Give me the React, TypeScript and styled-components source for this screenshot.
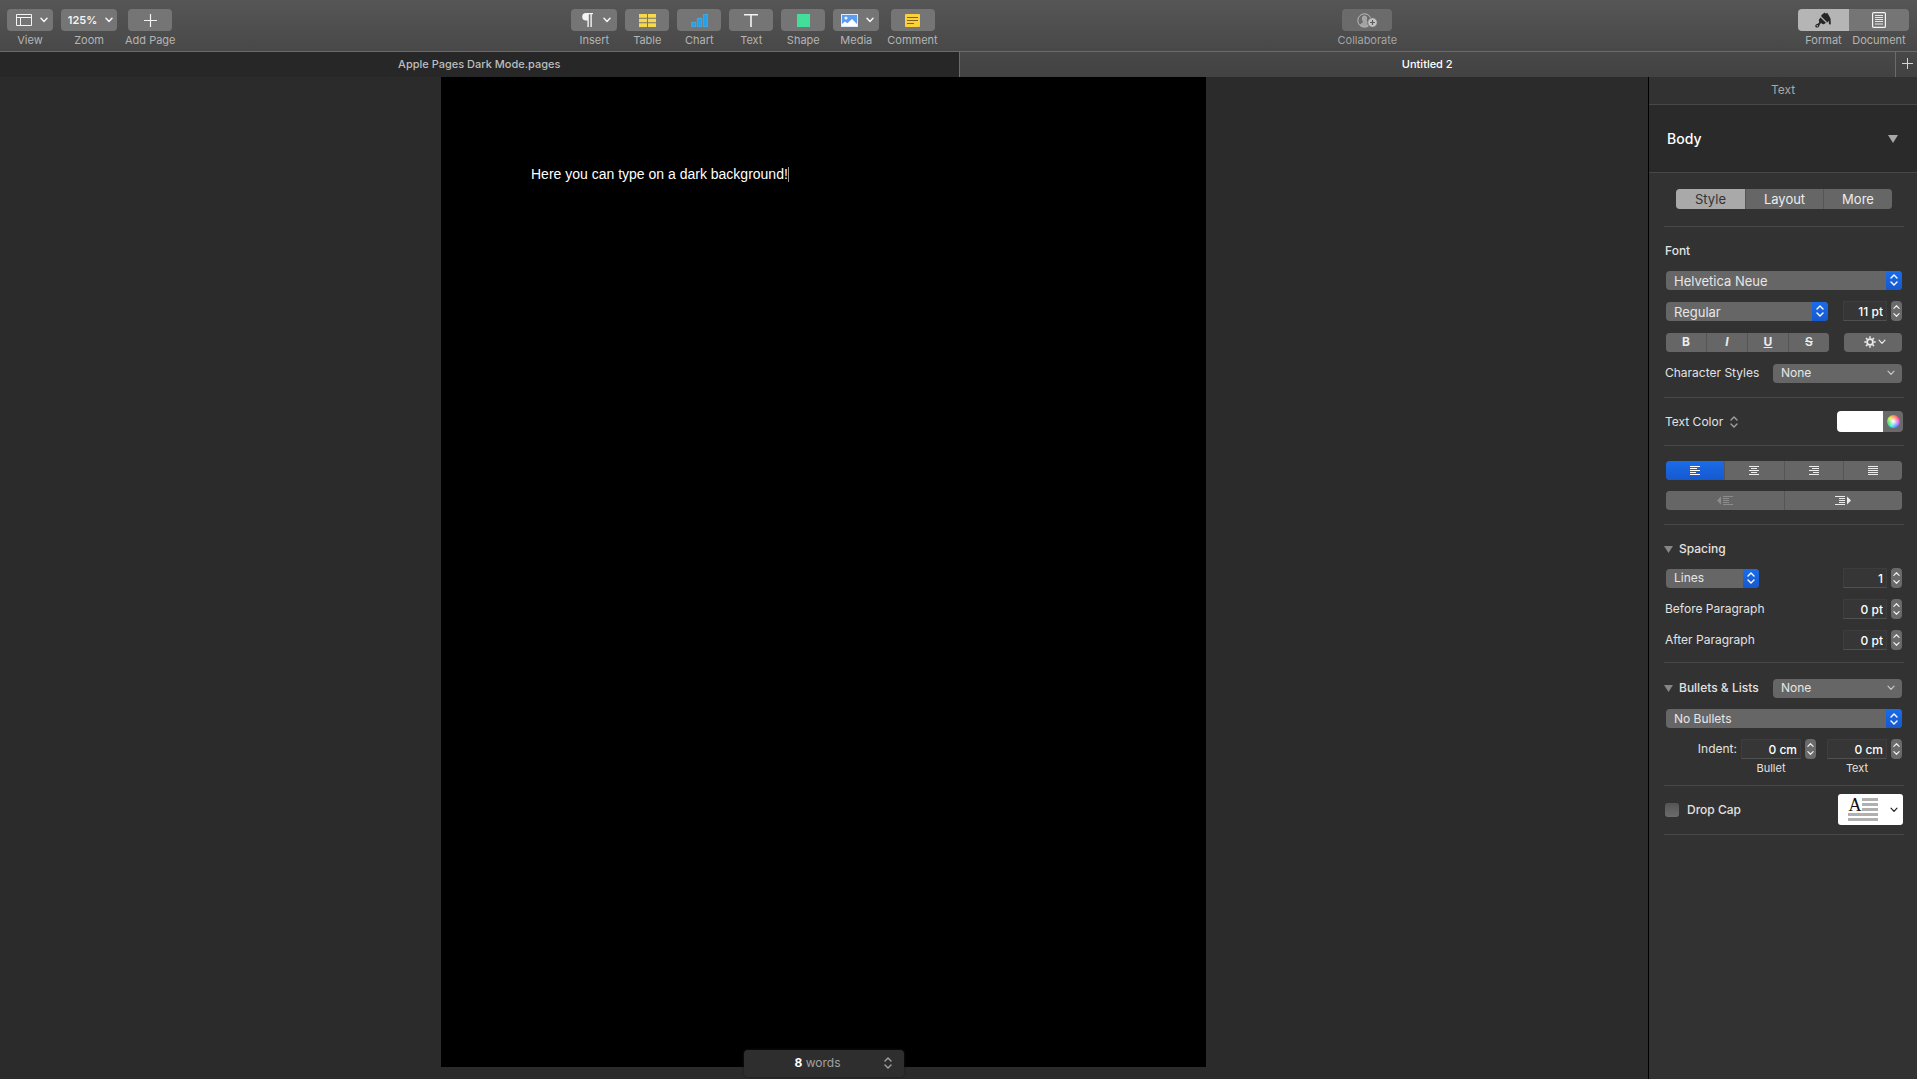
import React, { ReactNode, useState } from "react";
import styled, { createGlobalStyle, css } from "styled-components";

const Global = createGlobalStyle`
  *, *::before, *::after { box-sizing: border-box; }
  html, body, #root { height: 100%; }
  body {
    margin: 0;
    overflow: hidden;
    background: #2b2b2b;
    color: #e2e2e2;
    font-family: Inter, "Liberation Sans", sans-serif;
    font-size: 12px;
    line-height: 16px;
  }
  button, input, select, textarea { font: inherit; color: inherit; margin: 0; }
  button { padding: 0; border: 0; background: none; }
`;

const Window = styled.div`
  display: flex;
  flex-direction: column;
  height: 100vh;
`;

/* ---------- Toolbar ---------- */

const Toolbar = styled.header`
  display: flex;
  justify-content: space-between;
  align-items: flex-start;
  flex: none;
  height: 52px;
  padding: 9px 8px 0 7px;
  background: linear-gradient(#565656, #484848);
  border-bottom: 1px solid #6b6b6b;
`;

const ToolGroup = styled.div<{ $after?: number }>`
  display: flex;
  gap: 8px;
  margin-right: ${(p) => p.$after ?? 0}px;
`;

const Tool = styled.label<{ $dim?: boolean }>`
  display: flex;
  flex-direction: column;
  align-items: center;
  gap: 1px;
  font-size: 11px;
  color: ${(p) => (p.$dim ? "#a5a5a5" : "#b4b4b4")};
`;

const ToolButton = styled.button<{ $width: number; $dim?: boolean; $menu?: boolean }>`
  display: flex;
  align-items: center;
  justify-content: center;
  gap: 8px;
  width: ${(p) => p.$width}px;
  height: 22px;
  padding-left: ${(p) => (p.$menu ? 3 : 0)}px;
  border-radius: 4px;
  background: ${(p) => (p.$dim ? "#6b6b6b" : "#757575")};
  color: #f4f4f4;
`;

const ZoomValue = styled.span`
  font-size: 11px;
  font-weight: 600;
`;

const Modes = styled.div`
  display: grid;
  grid-template-columns: 51px 60px;
  row-gap: 1px;
  justify-items: center;
  margin-left: 5px;
  font-size: 11px;
  color: #b4b4b4;
`;

const ModeButton = styled.button<{ $active?: boolean }>`
  display: grid;
  place-items: center;
  width: 100%;
  height: 22px;
  border-radius: ${(p) => (p.$active ? "4px 0 0 4px" : "0 4px 4px 0")};
  background: ${(p) => (p.$active ? "#b5b5b5" : "#757575")};
  color: ${(p) => (p.$active ? "#262626" : "#f4f4f4")};
`;

/* ---------- Tabs ---------- */

const TabBar = styled.nav`
  display: flex;
  flex: none;
  height: 25px;
`;

const TabHalf = styled.div`
  display: flex;
  flex: 1;
`;

const Tab = styled.button<{ $active?: boolean }>`
  flex: 1;
  padding-bottom: 2px;
  font-size: 11px;
  font-weight: 500;
  ${(p) =>
    p.$active
      ? css`
          background: linear-gradient(#484848, #424242);
          color: #fff;
          border-left: 1px solid #6b6b6b;
        `
      : css`
          background: #272727;
          color: #bdbdbd;
        `}
`;

const NewTab = styled.button`
  display: grid;
  place-items: center;
  width: 22px;
  padding: 0 0 2px 2px;
  border-left: 1px solid #6b6b6b;
  background: linear-gradient(#484848, #424242);
  color: #d5d5d5;
`;

/* ---------- Canvas ---------- */

const Workspace = styled.div`
  display: flex;
  flex: 1;
  min-height: 0;
`;

const Canvas = styled.main`
  position: relative;
  display: flex;
  justify-content: center;
  flex: 1;
  padding: 0 1px 12px 0;
  background: #2b2b2b;
`;

const Page = styled.article`
  width: 765px;
  padding: 88px 90px;
  background: #000;
  color: #fff;
  font: 14px/18px "Liberation Sans", Arial, sans-serif;
`;

const Paragraph = styled.p`
  margin: 0;
`;

const Caret = styled.span`
  display: inline-block;
  width: 1px;
  height: 15px;
  vertical-align: -3px;
  background: #999;
`;

const WordCount = styled.button`
  position: absolute;
  bottom: 2px;
  left: 50%;
  display: grid;
  grid-template-columns: 1fr auto;
  align-items: center;
  width: 160px;
  height: 27px;
  padding: 0 12px 2px 7px;
  transform: translateX(-50%);
  border-radius: 4px;
  background: #2e2e2e;
  box-shadow: 0 0 3px #1c1c1c;
  color: #a2a2a2;
  strong { color: #fff; font-weight: 700; }
`;

/* ---------- Inspector ---------- */

const Inspector = styled.aside`
  flex: none;
  width: 269px;
  border-left: 1px solid #000;
  background: #323232;
`;

const InspectorTitle = styled.h2`
  height: 28px;
  margin: 0;
  padding: 5px 0 0;
  border-bottom: 1px solid #484848;
  text-align: center;
  font-size: 12px;
  font-weight: 400;
  color: #a8a8a8;
`;

const StyleMenu = styled.button`
  display: flex;
  align-items: center;
  justify-content: space-between;
  width: 100%;
  height: 68px;
  padding: 0 19px 0 18px;
  border-bottom: 1px solid #484848;
  background: #2a2a2a;
  color: #fff;
  font-size: 14px;
  font-weight: 500;
`;

const Section = styled.section<{ $top: number; $bottom: number; $gap?: number }>`
  display: flex;
  flex-direction: column;
  gap: ${(p) => p.$gap ?? 0}px;
  margin: 0 13px 0 15px;
  padding: ${(p) => p.$top}px 2px ${(p) => p.$bottom}px 1px;
  border-bottom: 1px solid #484848;
`;

const Row = styled.div<{ $height?: number; $gap?: number; $inset?: boolean }>`
  display: flex;
  align-items: center;
  gap: ${(p) => p.$gap ?? 0}px;
  height: ${(p) => p.$height ?? 20}px;
  padding-left: ${(p) => (p.$inset ? 1 : 0)}px;
`;

const Spacer = styled.span`
  flex: 1;
`;

const Heading = styled.h3`
  margin: 0;
  font-size: 12px;
  font-weight: 500;
`;

const Disclosure = styled.button`
  display: flex;
  align-items: center;
  gap: 6px;
  margin-left: -1px;
  font-weight: 500;
`;

const FieldLabel = styled.label`
  flex: none;
`;

const ColorMenu = styled.span`
  display: flex;
  align-items: center;
  gap: 7px;
  svg { color: #a0a0a0; }
`;

const Caption = styled.label<{ $width: number }>`
  width: ${(p) => p.$width}px;
  padding-right: 4px;
  text-align: center;
  font-size: 11px;
`;

const Segments = styled.div<{ $columns: string; $margin?: number }>`
  display: grid;
  grid-template-columns: ${(p) => p.$columns};
  flex: 1;
  gap: 1px;
  margin: 0 ${(p) => p.$margin ?? 0}px;
  border-radius: 4px;
  overflow: hidden;
  background: #555;
`;

type Tone = "light" | "blue" | "off";
const tones = {
  light: css`background: #a9a9a9; color: #333;`,
  blue: css`background: linear-gradient(#1a6ce8, #1659cf); color: #fff;`,
  off: css`background: #666; color: #8c8c8c;`,
};

const Segment = styled.button<{ $tone?: Tone; $size?: number }>`
  display: grid;
  place-items: center;
  height: ${(p) => p.$size ?? 19}px;
  background: #666;
  color: #ececec;
  ${(p) => p.$tone && tones[p.$tone]}
`;

const TabSegment = styled(Segment)`
  font-size: 13px;
`;

const Letter = styled.span<{ $kind: "b" | "i" | "u" | "s" }>`
  font-size: 12px;
  font-weight: 700;
  font-style: ${(p) => (p.$kind === "i" ? "italic" : "normal")};
  text-decoration: ${(p) => (p.$kind === "u" ? "underline" : "none")};
`;

const Struck = styled.s`
  padding: 0 2px;
  font-size: 12px;
  font-weight: 600;
`;

const GearButton = styled.button`
  display: flex;
  align-items: center;
  justify-content: center;
  gap: 2px;
  width: 58px;
  height: 19px;
  padding-left: 3px;
  border-radius: 4px;
  background: #666;
  color: #ececec;
`;

const SelectBox = styled.span<{ $width?: number }>`
  display: grid;
  align-items: center;
  flex: ${(p) => (p.$width ? "none" : "1")};
  width: ${(p) => (p.$width ? `${p.$width}px` : "auto")};
  height: 19px;
  border-radius: 4px;
  overflow: hidden;
  background: #666;
  > * { grid-area: 1 / 1; }
`;

const NativeSelect = styled.select<{ $large?: boolean }>`
  appearance: none;
  width: 100%;
  height: 19px;
  padding: ${(p) => (p.$large ? 2 : 0)}px 20px 0 8px;
  border: 0;
  background: none;
  color: #e6e6e6;
  font-size: ${(p) => (p.$large ? 13 : 12)}px;
`;

const SelectCap = styled.span<{ $blue?: boolean }>`
  display: grid;
  place-items: center;
  justify-self: end;
  width: ${(p) => (p.$blue ? 16 : 23)}px;
  height: 19px;
  pointer-events: none;
  background: ${(p) => (p.$blue ? "linear-gradient(#1a6ce8, #1659cf)" : "none")};
  color: ${(p) => (p.$blue ? "#fff" : "#c8c8c8")};
`;

const NumberInput = styled.input<{ $width: number }>`
  width: ${(p) => p.$width}px;
  height: 20px;
  padding: 0 3px;
  border: 1px solid #3d3d3d;
  border-bottom-color: #505050;
  background: #363636;
  color: #fff;
  font-weight: 500;
  text-align: right;
`;

const StepButton = styled.button`
  display: grid;
  place-items: center;
  width: 11px;
  height: 20px;
  border-radius: 4px;
  background: #6a6a6a;
  color: #eee;
`;

const ColorWell = styled.div`
  display: flex;
  width: 66px;
  height: 21px;
  margin-right: -1px;
  border-radius: 4px;
  overflow: hidden;
`;

const Swatch = styled.button`
  flex: 1;
  background: #fff;
`;

const WheelButton = styled.button`
  display: grid;
  place-items: center;
  width: 20px;
  background: #6a6a6a;
`;

const Wheel = styled.span`
  width: 13px;
  height: 13px;
  border-radius: 50%;
  background:
    radial-gradient(circle, #fff 0%, rgba(255, 255, 255, 0) 65%),
    conic-gradient(#ff8a4c, #ff4f7d, #b65cff, #4f8bff, #3fe3e0, #43e061, #c9ee4c, #ff8a4c);
`;

const CheckLabel = styled.label`
  display: flex;
  align-items: center;
  gap: 8px;
  font-weight: 500;
`;

const Check = styled.input`
  appearance: none;
  width: 14px;
  height: 14px;
  border-radius: 3px;
  background: linear-gradient(#555, #6c6c6c);
`;

const DropCapButton = styled.button`
  display: flex;
  align-items: center;
  gap: 12px;
  width: 65px;
  height: 31px;
  margin-right: -1px;
  padding-left: 10px;
  border-radius: 3px;
  background: #fff;
  color: #222;
`;

const DropCapSample = styled.span`
  display: grid;
  grid-template-columns: 14px 16px;
  font: 18px/14px "Liberation Serif", serif;
  color: #111;
`;

const Bars = styled.span<{ $wide?: boolean }>`
  grid-column: ${(p) => (p.$wide ? "1 / 3" : "auto")};
  height: ${(p) => (p.$wide ? 8 : 15)}px;
  background: repeating-linear-gradient(#b0b0b0 0 3px, #fff 3px 5px);
`;

/* ---------- Glyphs ---------- */

const ChevronDown = ({ w = 8, stroke = 1.5 }: { w?: number; stroke?: number }) => (
  <svg width={w} height={w / 2 + 2} viewBox="0 0 8 6" fill="none" stroke="currentColor" strokeWidth={stroke} strokeLinecap="round" strokeLinejoin="round">
    <path d="M1 1.2 4 4.4 7 1.2" />
  </svg>
);

const UpDown = ({ h = 12, w = 8 }: { h?: number; w?: number }) => (
  <svg width={w} height={h} viewBox={`0 0 8 ${h}`} fill="none" stroke="currentColor" strokeWidth="1.4" strokeLinecap="round" strokeLinejoin="round">
    <path d={`M1 4 4 1 7 4M1 ${h - 4} 4 ${h - 1} 7 ${h - 4}`} />
  </svg>
);

const Triangle = ({ w, color }: { w: number; color: string }) => (
  <svg width={w} height={w - 2} viewBox="0 0 10 8" preserveAspectRatio="none">
    <path d="M0 0h10L5 8z" fill={color} />
  </svg>
);

const Plus = ({ size }: { size: number }) => (
  <svg width={size} height={size} viewBox="0 0 13 13" stroke="currentColor" strokeWidth="1.2">
    <path d="M6.5 0v13M0 6.5h13" />
  </svg>
);

const ViewGlyph = () => (
  <svg width="16" height="12" viewBox="0 0 16 12" fill="none" stroke="currentColor">
    <path d="M.5.5h15v11H.5zM.5 3.5h15M4.5 3.5v8" />
  </svg>
);

const PilcrowGlyph = () => (
  <svg width="14" height="14" viewBox="-1 0 14 14" fill="currentColor">
    <path d="M4 0h7v1.200H9.800V14H8.400V1.200H6.800V14H5.400V7.600H4A3.800 3.800 0 0 1 4 0z" />
  </svg>
);

const TableGlyph = () => (
  <svg width="17" height="13" viewBox="0 0 17 13" fill="#f6d84b">
    <path d="M0 0h8v3.7H0zM9 0h8v3.7H9zM0 4.7h8v3.6H0zM9 4.7h8v3.6H9zM0 9.3h8V13H0zM9 9.3h8V13H9z" />
  </svg>
);

const ChartGlyph = () => (
  <svg width="17" height="13" viewBox="0 0 17 13" fill="#23a1ea" stroke="#49b9f4" strokeWidth=".6">
    <path d="M.3 8.3h4.4v4.4H.3zM6.3 4.3h4.4v8.4H6.3zM12.3.3h4.4v12.4h-4.4z" />
  </svg>
);

const TextGlyph = () => (
  <svg width="14" height="13" viewBox="0 0 14 13" fill="currentColor">
    <path d="M0 0h14v1.6H7.8V13H6.2V1.6H0z" />
  </svg>
);

const ShapeGlyph = () => (
  <svg width="13" height="13" viewBox="0 0 13 13">
    <path d="M0 0h13v13H0z" fill="#43df9a" />
  </svg>
);

const MediaGlyph = () => (
  <svg width="17" height="13" viewBox="0 0 17 13">
    <path d="M0 0h17v13H0z" fill="#dceafb" />
    <path d="M1 1h15v11H1z" fill="#5b9df0" />
    <circle cx="5" cy="4" r="1.6" fill="#e8f2ff" />
    <path d="M1 10l3-2.6 2.4 1.8L11 5l5 5v2H1z" fill="#fff" />
  </svg>
);

const CommentGlyph = () => (
  <svg width="15" height="13" viewBox="0 0 15 13">
    <rect width="15" height="13" rx="1" fill="#fbd03a" />
    <path d="M2 3.500h11M2 6.500h11M2 9.500h7" stroke="#7a651f" strokeWidth="1" />
  </svg>
);

const CollaborateGlyph = () => (
  <svg width="21" height="15" viewBox="0 0 21 15" fill="none" stroke="#b9b9b9">
    <circle cx="7.5" cy="7.5" r="6.7" />
    <path d="M7.5 3C5.6 3 5.2 4.400 5.500 6.200 5.700 7.700 6.400 8 6.400 9.200 6.400 10.300 4.500 10.300 3.300 11.800 5.500 14 9.500 14 11.500 12V9C9 9.500 9 8 9.400 6.400 9.800 4.400 9.300 3 7.500 3z" fill="#a2a2a2" strokeWidth=".8" />
    <circle cx="15.500" cy="9.500" r="4.800" fill="#c4c4c4" stroke="#6b6b6b" />
    <path d="M15.500 7v5M13 9.500h5" stroke="#5c5c5c" strokeWidth="1.200" />
  </svg>
);

const BrushGlyph = () => (
  <svg width="17" height="16" viewBox="0 0 17 16" fill="currentColor">
    <path d="M6.300 3.200 9.600.4l1.200 1.300L12.200.8l1.700 2.600 1.600 3.200.3 5c0 1.600-1.900 1.600-1.900 0V9.800c-.2-.9-1-.9-1.100 0-.1 1-1.100 1-1.300.2L6.300 4.700z" />
    <path d="M5.500 5.400l5.400 5.300-1.600 1.200c-1.100.7-1.700.2-2.500-.5-.8-.3-1.500.4-2 1.100-.5 1.300-.8 2.900-2.400 3.100C.7 15.800-.3 14.200.6 12.900c.7-.9 2.400-.9 3.200-1.900.6-.6.5-1.200.2-1.800-.6-1.200.6-2.600 1.500-3.800z" />
    <path d="M5.800 4.400 11.600 10.200" stroke="#b5b5b5" strokeWidth=".8" />
    <circle cx="2.300" cy="13.800" r=".8" fill="#b5b5b5" />
  </svg>
);

const DocumentGlyph = () => (
  <svg width="14" height="16" viewBox="0 0 14 16" fill="none" stroke="currentColor">
    <rect x=".6" y=".6" width="12.800" height="14.800" rx="1" strokeWidth="1.200" />
    <path d="M3 3.500h8M3 5.500h8M3 7.500h8M3 9.500h8M3 12h8" strokeWidth=".9" />
  </svg>
);

const GearGlyph = () => (
  <svg width="12" height="12" viewBox="0 0 12 12" fill="none" stroke="currentColor">
    <circle cx="6" cy="6" r="2.900" strokeWidth="1.700" />
    <path d="M6 .3v2M6 9.700v2M.3 6h2M9.700 6h2M2 2l1.400 1.400M8.600 8.600 10 10M2 10l1.400-1.400M8.600 3.400 10 2" strokeWidth="1.500" />
  </svg>
);

const lines = {
  left: "M0 .5h10M0 2.500h7M0 4.500h10M0 6.500h6M0 8.500h10",
  center: "M0 .5h10M2 2.500h6M0 4.500h10M2 6.500h6M0 8.500h10",
  right: "M0 .5h10M3 2.500h7M0 4.500h10M4 6.500h6M0 8.500h10",
  full: "M0 .5h10M0 2.500h10M0 4.500h10M0 6.500h10M0 8.500h10",
};

const AlignGlyph = ({ kind }: { kind: keyof typeof lines }) => (
  <svg width="10" height="9" viewBox="0 0 10 9" stroke="currentColor">
    <path d={lines[kind]} />
  </svg>
);

const OutdentGlyph = () => (
  <svg width="16" height="9" viewBox="0 0 16 9" stroke="currentColor">
    <path d="M4 .5 0 4.500l4 4z" fill="currentColor" stroke="none" />
    <path d="M6 .5h10M6 2.500h6M6 4.500h6M6 6.500h6M6 8.500h10" />
  </svg>
);

const IndentGlyph = () => (
  <svg width="16" height="9" viewBox="0 0 16 9" stroke="currentColor">
    <path d="M12 .5l4 4-4 4z" fill="currentColor" stroke="none" />
    <path d="M0 .5h10M4 2.500h6M4 4.500h6M4 6.500h6M0 8.500h10" />
  </svg>
);

/* ---------- Composed controls ---------- */

interface ToolItemProps { id: string; label: string; width?: number; dim?: boolean; menu?: boolean; children: ReactNode }

const ToolItem = ({ id, label, width = 44, dim, menu, children }: ToolItemProps) => (
  <Tool htmlFor={id} $dim={dim}>
    <ToolButton id={id} type="button" $width={width} $dim={dim} $menu={menu}>
      {children}
      {menu && <ChevronDown />}
    </ToolButton>
    {label}
  </Tool>
);

interface PopupProps { id?: string; name: string; value: string; width?: number; large?: boolean; plain?: boolean }

const Popup = ({ id, name, value, width, large, plain }: PopupProps) => (
  <SelectBox $width={width}>
    <NativeSelect id={id} aria-label={id ? undefined : name} $large={large} defaultValue={value}>
      <option>{value}</option>
    </NativeSelect>
    <SelectCap $blue={!plain}>{plain ? <ChevronDown w={8} stroke={1.2} /> : <UpDown />}</SelectCap>
  </SelectBox>
);

interface StepperProps { id?: string; name: string; value: string; width?: number }

const Stepper = ({ id, name, value, width = 44 }: StepperProps) => (
  <Row $gap={4}>
    <NumberInput id={id} aria-label={id ? undefined : name} $width={width} defaultValue={value} />
    <StepButton type="button" aria-label={`Step ${name}`}><UpDown h={14} w={7} /></StepButton>
  </Row>
);

export default function App() {
  const [dropCap, setDropCap] = useState(false);
  return (
    <Window>
      <Global />
      <Toolbar>
        <ToolGroup>
          <ToolItem id="view" label="View" width={46} menu><ViewGlyph /></ToolItem>
          <ToolItem id="zoom" label="Zoom" width={56} menu><ZoomValue>125%</ZoomValue></ToolItem>
          <ToolItem id="add-page" label="Add Page"><Plus size={13} /></ToolItem>
        </ToolGroup>
        <ToolGroup $after={4}>
          <ToolItem id="insert" label="Insert" width={46} menu><PilcrowGlyph /></ToolItem>
          <ToolItem id="table" label="Table"><TableGlyph /></ToolItem>
          <ToolItem id="chart" label="Chart"><ChartGlyph /></ToolItem>
          <ToolItem id="text" label="Text"><TextGlyph /></ToolItem>
          <ToolItem id="shape" label="Shape"><ShapeGlyph /></ToolItem>
          <ToolItem id="media" label="Media" width={46} menu><MediaGlyph /></ToolItem>
          <ToolItem id="comment" label="Comment"><CommentGlyph /></ToolItem>
        </ToolGroup>
        <ToolItem id="collaborate" label="Collaborate" width={50} dim><CollaborateGlyph /></ToolItem>
        <Modes>
          <ModeButton id="format" type="button" $active><BrushGlyph /></ModeButton>
          <ModeButton id="document" type="button"><DocumentGlyph /></ModeButton>
          <label htmlFor="format">Format</label>
          <label htmlFor="document">Document</label>
        </Modes>
      </Toolbar>

      <TabBar>
        <TabHalf><Tab type="button">Apple Pages Dark Mode.pages</Tab></TabHalf>
        <TabHalf>
          <Tab type="button" $active>Untitled 2</Tab>
          <NewTab type="button" aria-label="New tab"><Plus size={11} /></NewTab>
        </TabHalf>
      </TabBar>

      <Workspace>
        <Canvas>
          <Page><Paragraph>Here you can type on a dark background!<Caret /></Paragraph></Page>
          <WordCount type="button">
            <span><strong>8</strong> words</span>
            <UpDown />
          </WordCount>
        </Canvas>

        <Inspector>
          <InspectorTitle>Text</InspectorTitle>
          <StyleMenu type="button">Body<Triangle w={10} color="#a8a8a8" /></StyleMenu>

          <Section $top={16} $bottom={17}>
            <Row $inset>
              <Segments $columns="69px 77px 1fr" $margin={10}>
                <TabSegment type="button" $tone="light" $size={20}>Style</TabSegment>
                <TabSegment type="button" $size={20}>Layout</TabSegment>
                <TabSegment type="button" $size={20}>More</TabSegment>
              </Segments>
            </Row>
          </Section>

          <Section $top={16} $bottom={14} $gap={11}>
            <Row $height={16}><Heading>Font</Heading></Row>
            <Row $inset><Popup name="Typeface" value="Helvetica Neue" large /></Row>
            <Row $inset>
              <Popup name="Weight" value="Regular" width={162} large />
              <Spacer />
              <Stepper name="Font size" value="11 pt" />
            </Row>
            <Row $inset $gap={15}>
              <Segments $columns="repeat(4, 1fr)">
                <Segment type="button"><Letter $kind="b">B</Letter></Segment>
                <Segment type="button"><Letter $kind="i">I</Letter></Segment>
                <Segment type="button"><Letter $kind="u">U</Letter></Segment>
                <Segment type="button"><Struck>S</Struck></Segment>
              </Segments>
              <GearButton type="button" aria-label="Advanced options"><GearGlyph /><ChevronDown stroke={1.2} /></GearButton>
            </Row>
            <Row>
              <FieldLabel htmlFor="char-style">Character Styles</FieldLabel>
              <Spacer />
              <Popup id="char-style" name="Character Styles" value="None" width={129} plain />
            </Row>
          </Section>

          <Section $top={13} $bottom={13}>
            <Row $height={21}>
              <ColorMenu>Text Color<UpDown /></ColorMenu>
              <Spacer />
              <ColorWell>
                <Swatch type="button" aria-label="Text color" />
                <WheelButton type="button" aria-label="Color wheel"><Wheel /></WheelButton>
              </ColorWell>
            </Row>
          </Section>

          <Section $top={14} $bottom={14} $gap={10}>
            <Row $inset>
              <Segments $columns="repeat(4, 1fr)">
                <Segment type="button" aria-label="Align left" $tone="blue"><AlignGlyph kind="left" /></Segment>
                <Segment type="button" aria-label="Align center"><AlignGlyph kind="center" /></Segment>
                <Segment type="button" aria-label="Align right"><AlignGlyph kind="right" /></Segment>
                <Segment type="button" aria-label="Justify"><AlignGlyph kind="full" /></Segment>
              </Segments>
            </Row>
            <Row $inset>
              <Segments $columns="1fr 1fr">
                <Segment type="button" aria-label="Decrease indent" $tone="off"><OutdentGlyph /></Segment>
                <Segment type="button" aria-label="Increase indent"><IndentGlyph /></Segment>
              </Segments>
            </Row>
          </Section>

          <Section $top={16} $bottom={12} $gap={11}>
            <Row $height={16}>
              <Disclosure type="button"><Triangle w={9} color="#868686" />Spacing</Disclosure>
            </Row>
            <Row $inset>
              <Popup name="Spacing unit" value="Lines" width={93} />
              <Spacer />
              <Stepper name="Line spacing" value="1" />
            </Row>
            <Row>
              <FieldLabel htmlFor="before">Before Paragraph</FieldLabel>
              <Spacer />
              <Stepper id="before" name="Before Paragraph" value="0 pt" />
            </Row>
            <Row>
              <FieldLabel htmlFor="after">After Paragraph</FieldLabel>
              <Spacer />
              <Stepper id="after" name="After Paragraph" value="0 pt" />
            </Row>
          </Section>

          <Section $top={15} $bottom={8}>
            <Row>
              <Disclosure type="button"><Triangle w={9} color="#868686" />Bullets &amp; Lists</Disclosure>
              <Spacer />
              <Popup name="List style" value="None" width={129} plain />
            </Row>
            <Row $inset $height={41}><Popup name="Bullet type" value="No Bullets" /></Row>
            <Row>
              <Spacer />
              <Row $gap={4}>
                <FieldLabel htmlFor="indent-bullet">Indent:</FieldLabel>
                <Stepper id="indent-bullet" name="Bullet indent" value="0 cm" width={60} />
              </Row>
              <Row $gap={11}><span /><Stepper id="indent-text" name="Text indent" value="0 cm" width={60} /></Row>
            </Row>
            <Row $height={18}>
              <Spacer />
              <Caption htmlFor="indent-bullet" $width={86}>Bullet</Caption>
              <Caption htmlFor="indent-text" $width={86}>Text</Caption>
            </Row>
          </Section>

          <Section $top={8} $bottom={9}>
            <Row $height={31}>
              <CheckLabel>
                <Check type="checkbox" checked={dropCap} onChange={(e) => setDropCap(e.target.checked)} />
                Drop Cap
              </CheckLabel>
              <Spacer />
              <DropCapButton type="button" aria-label="Drop cap style">
                <DropCapSample>A<Bars /><Bars $wide /></DropCapSample>
                <ChevronDown stroke={1.2} />
              </DropCapButton>
            </Row>
          </Section>
        </Inspector>
      </Workspace>
    </Window>
  );
}
